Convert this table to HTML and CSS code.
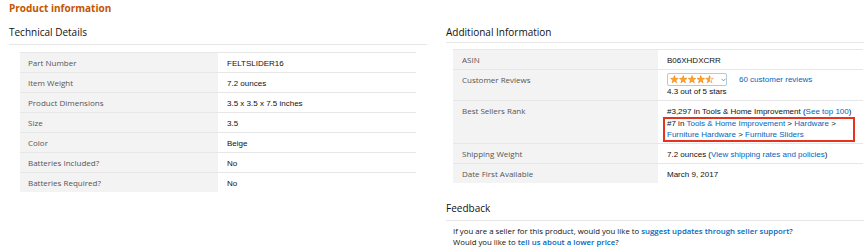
FILE: index.html
```html
<!DOCTYPE html>
<html lang="en">
<head>
    <meta charset="UTF-8">
    <title>Product information</title>
    <link rel="stylesheet" href="styles.css">
</head>
<body>

    <div class="product-info">
        <section class="col col-left">
            <h2 class="section-title">Product information</h2>
            <h3 class="block-title">Technical Details</h3>
            <table class="spec-table">
                <tr><td class="label">Part Number</td><td class="value">FELTSLIDER16</td></tr>
                <tr><td class="label">Item Weight</td><td class="value">7.2 ounces</td></tr>
                <tr><td class="label">Product Dimensions</td><td class="value">3.5 x 3.5 x 7.5 inches</td></tr>
                <tr><td class="label">Size</td><td class="value">3.5</td></tr>
                <tr><td class="label">Color</td><td class="value">Beige</td></tr>
                <tr><td class="label">Batteries Included?</td><td class="value">No</td></tr>
                <tr><td class="label">Batteries Required?</td><td class="value">No</td></tr>
            </table>
        </section>

        <section class="col col-right">
            <h3 class="block-title">Additional Information</h3>
            <table class="spec-table spec-table-wide">
                <tr><td class="label">ASIN</td><td class="value">B06XHDXCRR</td></tr>
                <tr>
                    <td class="label">Customer Reviews</td>
                    <td class="value reviews">
                        <div class="stars-line">
                            <span class="stars-pick">
                                <svg class="stars" width="44" height="9" viewBox="0 0 44 9">
                                    <defs>
                                        <linearGradient id="halfFill">
                                            <stop offset="50%" stop-color="#ffa41c"/>
                                            <stop offset="50%" stop-color="#fff"/>
                                        </linearGradient>
                                        <polygon id="star" points="0,-4 0.96,-1.32 3.8,-1.24 1.56,0.5 2.35,3.24 0,1.64 -2.35,3.24 -1.56,0.5 -3.8,-1.24 -0.96,-1.32"/>
                                    </defs>
                                    <g fill="#ffa41c" stroke="#e47911" stroke-width="0.5" stroke-linejoin="round">
                                        <use href="#star" x="4.4" y="4.6"/>
                                        <use href="#star" x="13.2" y="4.6"/>
                                        <use href="#star" x="22" y="4.6"/>
                                        <use href="#star" x="30.8" y="4.6"/>
                                        <use href="#star" x="39.6" y="4.6" fill="url(#halfFill)"/>
                                    </g>
                                </svg>
                                <svg class="chevron" width="5" height="4" viewBox="0 0 5 4">
                                    <polyline points="0.5,0.8 2.5,2.8 4.5,0.8" fill="none" stroke="#777" stroke-width="0.8"/>
                                </svg>
                            </span>
                            <a href="#" class="link">60 customer reviews</a>
                        </div>
                        <div>4.3 out of 5 stars</div>
                    </td>
                </tr>
                <tr>
                    <td class="label">Best Sellers Rank</td>
                    <td class="value rank">
                        <div>#3,297 in Tools &amp; Home Improvement (<a href="#" class="link">See top 100</a>)</div>
                        <div class="rank-highlight">
                            <div>#7 in <a href="#" class="link">Tools &amp; Home Improvement</a> &gt; <a href="#" class="link">Hardware</a> &gt;</div>
                            <div><a href="#" class="link">Furniture Hardware</a> &gt; <a href="#" class="link">Furniture Sliders</a></div>
                        </div>
                    </td>
                </tr>
                <tr><td class="label">Shipping Weight</td><td class="value">7.2 ounces (<a href="#" class="link">View shipping rates and policies</a>)</td></tr>
                <tr><td class="label">Date First Available</td><td class="value">March 9, 2017</td></tr>
            </table>

            <h3 class="block-title feedback-title">Feedback</h3>
            <p class="feedback">
                If you are a seller for this product, would you like to <a href="#" class="link strong">suggest updates through seller support</a>?<br>
                Would you like to <a href="#" class="link strong">tell us about a lower price</a>?
            </p>
        </section>
    </div>

</body>
</html>
```

FILE: styles.css
```css
body {
    margin: 0;
    background-color: #fff;
    color: #111;
    font-family: 'Open Sans', sans-serif;
}
.product-info {
    display: flex;
    align-items: flex-start;
}
.col-left {
    width: 418px;
    padding-left: 9px;
}
.col-right {
    width: 418px;
    margin-left: 19px;
}
.section-title {
    margin: 0;
    padding-top: 1px;
    font-size: 10px;
    line-height: 14px;
    font-weight: 700;
    color: #c45500;
}
.block-title {
    margin: 10px 0 0;
    padding-bottom: 5px;
    font-size: 10px;
    line-height: 14px;
    font-weight: 400;
    color: #111;
    border-bottom: 1px solid #e7e7e7;
}
.col-right .block-title {
    margin-top: 25px;
    padding-bottom: 3px;
}
.col-right .feedback-title {
    margin-top: 18px;
    padding-bottom: 5px;
}
.spec-table {
    border-collapse: collapse;
    width: 396px;
    margin: 7px 0 0 11px;
}
.spec-table-wide {
    width: 410px;
    margin: 6px 0 0 7px;
}
.spec-table td {
    width: 50%;
    padding: 5px 0 2px 8px;
    font-size: 8px;
    line-height: 12px;
    vertical-align: top;
    border-top: 1px solid #e7e7e7;
}
.spec-table .label {
    padding-top: 4px;
    padding-bottom: 3px;
    background-color: #f3f3f3;
    color: #555;
}
.spec-table .value {
    padding-left: 9px;
    font-family: 'Liberation Sans', Arial, sans-serif;
    color: #111;
}
.spec-table-wide .label {
    padding-left: 9px;
}
.link {
    color: #0066c0;
    text-decoration: none;
}
.link.strong {
    font-weight: 600;
}

/* reviews cell */
.spec-table .reviews {
    padding-top: 3px;
}
.stars-line {
    display: flex;
    align-items: center;
    height: 13px;
}
.stars-pick {
    display: inline-flex;
    align-items: center;
    box-sizing: border-box;
    width: 60px;
    height: 13px;
    padding: 0 0 0 2px;
    border: 1px solid #aecbe6;
    border-radius: 2px;
}
.stars {
    display: block;
}
.chevron {
    display: block;
    margin-left: 7px;
}
.stars-line .link {
    margin-left: 12px;
}

/* best sellers rank */
.spec-table .rank {
    line-height: 11.5px;
}
.rank-highlight {
    width: 187px;
    margin-left: -3px;
    padding-left: 3px;
    outline: 2px solid #e6321e;
    outline-offset: -1px;
}

.feedback {
    margin: 5px 0 0 7px;
    font-size: 7.8px;
    line-height: 11px;
    color: #111;
}
```
